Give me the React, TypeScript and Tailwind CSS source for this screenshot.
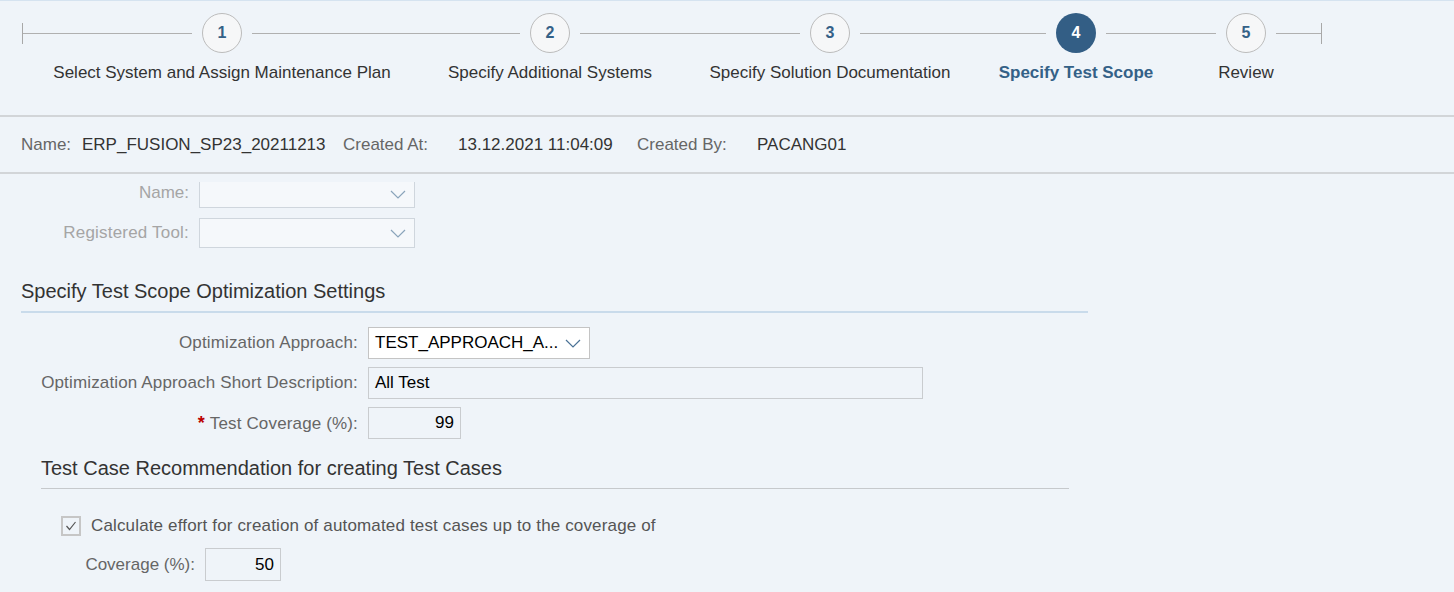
import React from 'react';

const steps = [
  { n: 1, label: 'Select System and Assign Maintenance Plan', w: 'w-[400px]' },
  { n: 2, label: 'Specify Additional Systems', w: 'w-[256px]' },
  { n: 3, label: 'Specify Solution Documentation', w: 'w-[304px]' },
  { n: 4, label: 'Specify Test Scope', w: 'w-[188px]', active: true },
  { n: 5, label: 'Review', w: 'w-[152px]' },
];

const Chevron = ({ color = '#8aa4bb' }: { color?: string }) => (
  <svg width="16" height="9" viewBox="0 0 16 9" fill="none">
    <polyline points="1,1 8,8 15,1" stroke={color} strokeWidth="1.2" />
  </svg>
);

const Wizard = () => (
  <div className="h-[115px] border-t border-[#d5e3f0] pt-[12px] pl-[22px] flex">
    {steps.map((s, i) => (
      <div key={s.n} className={`${s.w} flex flex-col items-center`}>
        <div className="w-full h-10 flex items-center">
          <div className="flex-1 h-px bg-[#b0b0b0] relative">
            {i === 0 && <div className="absolute left-0 top-[-10px] w-px h-[21px] bg-[#a8a8a8]" />}
          </div>
          <div
            className={`mx-[10px] w-10 h-10 rounded-full flex items-center justify-center text-[16px] font-bold ${
              s.active ? 'bg-[#335e85] text-white' : 'bg-[#f6f7f8] border border-[#bcbcbc] text-[#346187]'
            }`}
          >
            {s.n}
          </div>
          <div className="flex-1 h-px bg-[#b0b0b0] relative">
            {i === steps.length - 1 && <div className="absolute right-0 top-[-10px] w-px h-[21px] bg-[#a8a8a8]" />}
          </div>
        </div>
        <div
          className={`mt-[10px] leading-[19px] text-[17px] whitespace-nowrap ${
            s.active ? 'font-bold text-[#346187]' : 'text-[#333]'
          }`}
        >
          {s.label}
        </div>
      </div>
    ))}
  </div>
);

const InfoBar = () => (
  <div className="h-[59px] border-y-2 border-[#d2d5d8] flex items-center pl-[21px] text-[17px] whitespace-nowrap">
    <span className="w-[61px] text-[#666]">Name:</span>
    <span className="w-[261px] text-[#333]">ERP_FUSION_SP23_20211213</span>
    <span className="w-[115px] text-[#666]">Created At:</span>
    <span className="w-[179px] text-[#333]">13.12.2021 11:04:09</span>
    <span className="w-[120px] text-[#666]">Created By:</span>
    <span className="text-[#333]">PACANG01</span>
  </div>
);

const FormRow = ({ label, children, star }: { label: string; children: React.ReactNode; star?: boolean }) => (
  <div className="flex items-center h-8">
    <div className="w-[358px] text-right text-[17px] tracking-[0.15px] text-[#666] whitespace-nowrap">
      {star && <span className="text-[#bb0000] font-bold text-[18px] mr-[5px]">*</span>}
      {label}
    </div>
    <div className="ml-[10px]">{children}</div>
  </div>
);

export default function App() {
  return (
    <div className="w-[1454px] h-[592px] overflow-hidden bg-[#eff4f9] font-['Liberation_Sans',Arial,sans-serif]">
      <Wizard />
      <InfoBar />

      <div className="pt-[8px]">
        <div className="flex items-start">
          <div className="w-[189px] text-right text-[17px] leading-[22px] text-[#a5a5a5]">Name:</div>
          <div className="ml-[10px] w-[216px] h-[26px] border-x border-b border-[#cfd6dd] bg-[#f5f8fb] flex items-center justify-end pr-[8px]">
            <Chevron />
          </div>
        </div>
        <div className="flex items-center mt-[10px]">
          <div className="w-[189px] text-right text-[17px] tracking-[0.2px] text-[#a5a5a5]">Registered Tool:</div>
          <div className="ml-[10px] w-[216px] h-[30px] border border-[#cfd6dd] bg-[#f5f8fb] flex items-center justify-end pr-[8px]">
            <Chevron />
          </div>
        </div>
      </div>

      <div className="ml-[21px] w-[1067px] mt-[32px] pb-[8px] border-b-2 border-[#c9dbeb]">
        <div className="text-[20px] leading-[23px] text-[#333]">Specify Test Scope Optimization Settings</div>
      </div>

      <div className="mt-[14px] flex flex-col gap-2">
        <FormRow label="Optimization Approach:">
          <div className="w-[222px] h-8 bg-white border border-[#c4c4c4] flex items-center justify-between pl-[6px] pr-[8px]">
            <span className="text-[17px] text-black">TEST_APPROACH_A...</span>
            <Chevron color="#4a7296" />
          </div>
        </FormRow>
        <FormRow label="Optimization Approach Short Description:">
          <div className="w-[555px] h-8 border border-[#c9cccf] flex items-center pl-[6px] text-[17px] text-black">All Test</div>
        </FormRow>
        <FormRow label="Test Coverage (%):" star>
          <div className="w-[93px] h-8 border border-[#c9cccf] flex items-center justify-end pr-[6px] text-[17px] text-black">99</div>
        </FormRow>
      </div>

      <div className="ml-[41px] w-[1028px] mt-[18px] pb-[8px] border-b border-[#c6c9cc]">
        <div className="text-[20px] leading-[23px] text-[#333]">Test Case Recommendation for creating Test Cases</div>
      </div>

      <div className="mt-[27px] ml-[61px] h-5 flex items-center">
        <div className="w-5 h-5 border-2 border-[#c6c6c6] flex items-center justify-center">
          <svg width="12" height="10" viewBox="0 0 12 10" fill="none">
            <polyline points="1.5,5 4.5,8.5 10.5,1" stroke="#555" strokeWidth="1.2" />
          </svg>
        </div>
        <span className="ml-[10px] text-[17px] leading-5 tracking-[0.15px] text-[#555] whitespace-nowrap">
          Calculate effort for creation of automated test cases up to the coverage of
        </span>
      </div>

      <div className="mt-[12px] flex items-center">
        <div className="w-[195px] text-right text-[17px] text-[#666]">Coverage (%):</div>
        <div className="ml-[10px] w-[76px] h-[33px] border border-[#c9cccf] flex items-center justify-end pr-[6px] text-[17px] text-black">50</div>
      </div>
    </div>
  );
}
